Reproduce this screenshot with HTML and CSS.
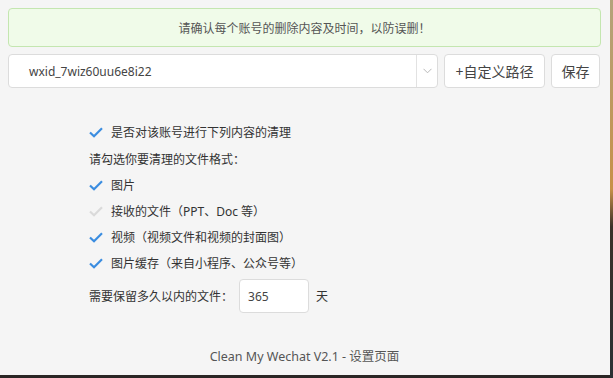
FILE: index.html
```html
<!DOCTYPE html>
<html lang="zh-CN">
<head>
<meta charset="utf-8">
<title>Clean My Wechat V2.1 - 设置页面</title>
<link rel="stylesheet" href="styles.css">
</head>
<body>
<div class="window">
  <div class="alert">请确认每个账号的删除内容及时间，以防误删！</div>
  <div class="toolbar">
    <div class="select">
      <span class="select-value">wxid_7wiz60uu6e8i22</span>
      <span class="select-arrow">
        <svg width="9" height="6" viewBox="0 0 9 6"><path d="M0.5 0.8 L4.5 4.8 L8.5 0.8" fill="none" stroke="#b8b8b8" stroke-width="1"/></svg>
      </span>
    </div>
    <button class="btn btn-path">+自定义路径</button>
    <button class="btn btn-save">保存</button>
  </div>
  <div class="options">
    <div class="row check-row">
      <span class="check"><svg width="14" height="11" viewBox="0 0 14 11"><path d="M1 5.5 L5 9.2 L13 1.2" fill="none" stroke="#3b8de0" stroke-width="2.2"/></svg></span>
      <span>是否对该账号进行下列内容的清理</span>
    </div>
    <div class="row label-row">请勾选你要清理的文件格式：</div>
    <div class="row check-row">
      <span class="check"><svg width="14" height="11" viewBox="0 0 14 11"><path d="M1 5.5 L5 9.2 L13 1.2" fill="none" stroke="#3b8de0" stroke-width="2.2"/></svg></span>
      <span>图片</span>
    </div>
    <div class="row check-row">
      <span class="check"><svg width="14" height="11" viewBox="0 0 14 11"><path d="M1 5.5 L5 9.2 L13 1.2" fill="none" stroke="#dadada" stroke-width="2.2"/></svg></span>
      <span>接收的文件（PPT、Doc 等）</span>
    </div>
    <div class="row check-row">
      <span class="check"><svg width="14" height="11" viewBox="0 0 14 11"><path d="M1 5.5 L5 9.2 L13 1.2" fill="none" stroke="#3b8de0" stroke-width="2.2"/></svg></span>
      <span>视频（视频文件和视频的封面图）</span>
    </div>
    <div class="row check-row">
      <span class="check"><svg width="14" height="11" viewBox="0 0 14 11"><path d="M1 5.5 L5 9.2 L13 1.2" fill="none" stroke="#3b8de0" stroke-width="2.2"/></svg></span>
      <span>图片缓存（来自小程序、公众号等）</span>
    </div>
    <div class="days-row">
      <span>需要保留多久以内的文件：</span>
      <input class="days-input" type="text" value="365">
      <span>天</span>
    </div>
  </div>
  <div class="footer">Clean My Wechat V2.1 - 设置页面</div>
</div>
</body>
</html>
```
FILE: styles.css
```css
html, body {
  margin: 0;
  padding: 0;
}
html {
  background: linear-gradient(to bottom, #b3a37c 0%, #c79048 50%, #3b3129 60%, #2c3034 100%);
  height: 378px;
}
body {
  width: 613px;
  height: 378px;
  overflow: hidden;
  font-family: "Noto Sans", "Noto Sans CJK SC", sans-serif;
  font-size: 12px;
  color: #333;
}
.window {
  width: 610px;
  height: 375px;
  box-sizing: border-box;
  background: #f5f5f5;
  padding: 8px 9px 0 8px;
  display: flex;
  flex-direction: column;
  box-shadow: 0 3px 0 #2a2624;
}
.alert {
  height: 39px;
  box-sizing: border-box;
  border: 1px solid #c4e6b0;
  border-radius: 4px;
  background: #f0fbe9;
  color: #555;
  display: flex;
  align-items: center;
  justify-content: center;
  font-size: 12px;
}
.toolbar {
  margin-top: 7px;
  height: 34px;
  display: flex;
  gap: 6px;
}
.select {
  width: 430px;
  box-sizing: border-box;
  border: 1px solid #dcdcdc;
  border-radius: 4px;
  background: #fff;
  display: flex;
  align-items: center;
}
.select-value {
  flex: 1;
  padding-left: 20px;
  color: #444;
  font-size: 12px;
}
.select-arrow {
  width: 20px;
  align-self: stretch;
  border-left: 1px solid #e2e2e2;
  display: flex;
  align-items: center;
  justify-content: center;
}
.btn {
  box-sizing: border-box;
  border: 1px solid #dcdcdc;
  border-radius: 4px;
  background: #fff;
  color: #444;
  font-family: inherit;
  font-size: 14px;
  padding: 0;
}
.btn-path { width: 101px; }
.btn-save { width: 49px; }
.options {
  margin-top: 31px;
  margin-left: 81px;
  display: flex;
  flex-direction: column;
}
.row {
  height: 26px;
  display: flex;
  align-items: center;
}
.label-row {
  height: 27px;
}
.check {
  width: 22px;
  display: flex;
  align-items: center;
}
.days-row {
  margin-top: 3px;
  display: flex;
  align-items: center;
  height: 34px;
}
.days-input {
  margin-left: 6px;
  margin-right: 7px;
  width: 70px;
  height: 34px;
  box-sizing: border-box;
  border: 1px solid #dcdcdc;
  border-radius: 4px;
  background: #fff;
  padding: 0 0 0 8px;
  font-family: inherit;
  font-size: 12px;
  color: #444;
  outline: none;
}
.footer {
  margin-top: auto;
  margin-bottom: 10px;
  text-align: center;
  color: #555;
  font-size: 12.5px;
}
```
